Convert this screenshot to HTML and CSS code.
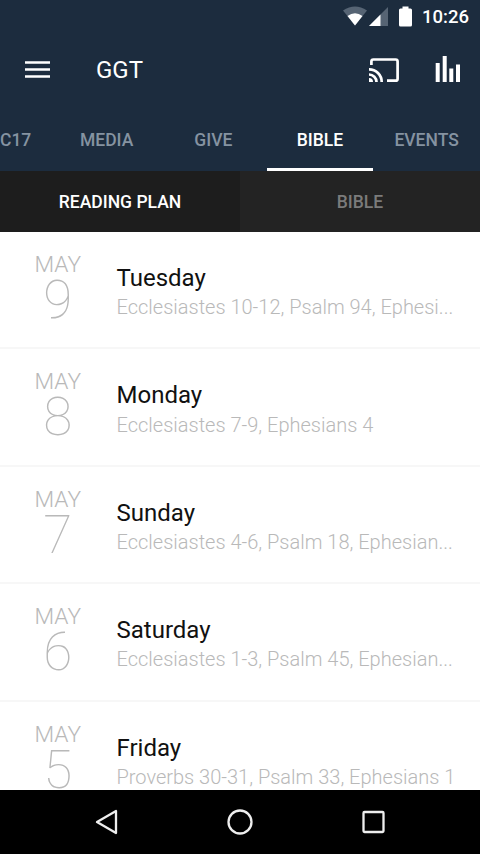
FILE: index.html
```
<!DOCTYPE html>
<html lang="en">
<head>
    <meta charset="UTF-8">
    <meta name="viewport" content="width=device-width, initial-scale=1.0">
    <title>GGT</title>
    <link rel="stylesheet" href="styles.css">
</head>
<body>
    <div class="screen">
        <header class="header">
            <div class="status-bar">
                <svg class="status-icons" width="78" height="34" viewBox="0 0 78 34">
                    <path d="M0 10.500Q12 2.500 24 10.500L12 25.500Z" fill="#566474"/>
                    <path d="M4.500 16Q12 10.500 19.500 16L12 25.500Z" fill="#fff"/>
                    <path d="M45 7V26H26Z" fill="#566474"/>
                    <path d="M37.500 14.500V26H26Z" fill="#fff"/>
                    <path d="M59.500 6.500h6v2h2q1.500 0 1.500 1.500v15q0 1.500-1.500 1.500h-10q-1.500 0-1.500-1.500V10q0-1.500 1.500-1.500h2z" fill="#fff"/>
                </svg>
                <span class="clock">10:26</span>
            </div>
            <div class="toolbar">
                <svg class="menu-icon" width="26" height="20" viewBox="0 0 26 20">
                    <path d="M0 2.500h25M0 9.500h25M0 16.500h25" stroke="#fff" stroke-width="2.700"/>
                </svg>
                <h1 class="app-title">GGT</h1>
                <svg class="cast-icon" width="32" height="27" viewBox="0 0 32 27" fill="none" stroke="#fff" stroke-width="2.700">
                    <path d="M2.400 8V4.500q0-2 2-2h22.200q2 0 2 2v17.200q0 2-2 2H18"/>
                    <path d="M0 12.300a12.700 12.700 0 0 1 12.700 12.700M0 17.500a7.500 7.500 0 0 1 7.500 7.500"/>
                    <path d="M0 21a4 4 0 0 1 4 4H0z" fill="#fff" stroke="none"/>
                </svg>
                <svg class="bars-icon" width="26" height="28" viewBox="0 0 26 28" fill="#fff">
                    <path d="M.700 7h4v19h-4zM7.700 0h4v26h-4zM14.300 12.500h4V26h-4zM21 8.500h4V26h-4z"/>
                </svg>
            </div>
            <nav class="tabs">
                <a class="tab tab-first">C17</a>
                <a class="tab">MEDIA</a>
                <a class="tab">GIVE</a>
                <a class="tab active">BIBLE</a>
                <a class="tab">EVENTS</a>
            </nav>
        </header>

        <nav class="sub-tabs">
            <a class="sub-tab active">READING PLAN</a>
            <a class="sub-tab">BIBLE</a>
        </nav>

        <main class="list">
            <div class="row">
                <div class="date"><span class="month">MAY</span><span class="day">9</span></div>
                <div class="info">
                    <h2>Tuesday</h2>
                    <p>Ecclesiastes 10-12, Psalm 94, Ephesi...</p>
                </div>
            </div>
            <div class="row">
                <div class="date"><span class="month">MAY</span><span class="day">8</span></div>
                <div class="info">
                    <h2>Monday</h2>
                    <p>Ecclesiastes 7-9, Ephesians 4</p>
                </div>
            </div>
            <div class="row">
                <div class="date"><span class="month">MAY</span><span class="day">7</span></div>
                <div class="info">
                    <h2>Sunday</h2>
                    <p>Ecclesiastes 4-6, Psalm 18, Ephesian...</p>
                </div>
            </div>
            <div class="row">
                <div class="date"><span class="month">MAY</span><span class="day">6</span></div>
                <div class="info">
                    <h2>Saturday</h2>
                    <p>Ecclesiastes 1-3, Psalm 45, Ephesian...</p>
                </div>
            </div>
            <div class="row">
                <div class="date"><span class="month">MAY</span><span class="day">5</span></div>
                <div class="info">
                    <h2>Friday</h2>
                    <p>Proverbs 30-31, Psalm 33, Ephesians 1</p>
                </div>
            </div>
        </main>

        <footer class="nav-bar">
            <svg width="28" height="28" viewBox="0 0 28 28"><path d="M4 14L23 3v22z"/></svg>
            <svg width="28" height="28" viewBox="0 0 28 28"><circle cx="14" cy="14" r="11.500"/></svg>
            <svg width="28" height="28" viewBox="0 0 28 28"><rect x="3.500" y="4" width="20" height="20" rx="1"/></svg>
        </footer>
    </div>
</body>
</html>
```
FILE: styles.css
```
:root {
    --navy: #1c2c3e;
    --muted: #8593a1;
    --grey: #b9b9b9;
}

* {
    margin: 0;
    padding: 0;
    box-sizing: border-box;
}

body {
    font-family: Roboto, sans-serif;
    background: #fff;
}

.screen {
    display: flex;
    flex-direction: column;
    width: 480px;
    height: 854px;
    overflow: hidden;
}

.header {
    height: 171px;
    flex-shrink: 0;
    background: var(--navy);
    color: #fff;
}

.status-bar {
    display: flex;
    justify-content: flex-end;
    height: 34px;
    padding-right: 10px;
}

.status-icons {
    margin-right: 1px;
}

.clock {
    width: 48px;
    font-size: 18.5px;
    font-weight: 500;
    line-height: 34px;
    white-space: nowrap;
}

.toolbar {
    display: flex;
    align-items: center;
    height: 72px;
    padding: 0 19px 0 25px;
}

.app-title {
    flex: 1;
    margin-left: 45px;
    font-size: 24px;
    font-weight: 400;
    line-height: 73px;
}

.cast-icon {
    margin-right: 34px;
}

.tabs {
    display: flex;
    height: 65px;
}

.tab {
    width: 106.67px;
    border-bottom: 3px solid transparent;
    color: var(--muted);
    font-size: 17.5px;
    font-weight: 500;
    line-height: 68px;
    text-align: center;
}

.tab-first {
    width: 53.33px;
    text-align: left;
}

.tab.active {
    border-bottom-color: #fff;
    color: #fff;
}

.sub-tabs {
    display: flex;
    height: 61px;
    flex-shrink: 0;
}

.sub-tab {
    flex: 1;
    background: #232323;
    color: #7b7b7b;
    font-size: 17.5px;
    font-weight: 500;
    line-height: 63px;
    text-align: center;
}

.sub-tab.active {
    background: #1d1d1d;
    color: #fff;
}

.list {
    flex: 1;
    min-height: 0;
    overflow: hidden;
}

.row {
    display: flex;
    height: 117.4px;
    border-bottom: 2px solid #f7f7f7;
}

.date {
    display: flex;
    flex-direction: column;
    width: 115.5px;
    margin-right: 1px;
    padding-top: 21px;
    color: var(--grey);
    text-align: center;
}

.month {
    font-size: 22.7px;
    font-weight: 300;
    line-height: 24px;
}

.day {
    font-size: 53px;
    font-weight: 100;
    line-height: 46px;
}

.info {
    padding-top: 31px;
    white-space: nowrap;
}

.info h2 {
    color: #111;
    font-size: 24px;
    font-weight: 400;
    line-height: 30px;
}

.info p {
    margin-top: 1.3px;
    color: var(--grey);
    font-size: 20px;
    font-weight: 300;
    line-height: 26px;
}

.nav-bar {
    display: flex;
    align-items: center;
    justify-content: center;
    gap: 105.5px;
    height: 64px;
    flex-shrink: 0;
    background: #000;
}

.nav-bar svg {
    fill: none;
    stroke: #eee;
    stroke-width: 2.3;
    stroke-linejoin: round;
}
```
